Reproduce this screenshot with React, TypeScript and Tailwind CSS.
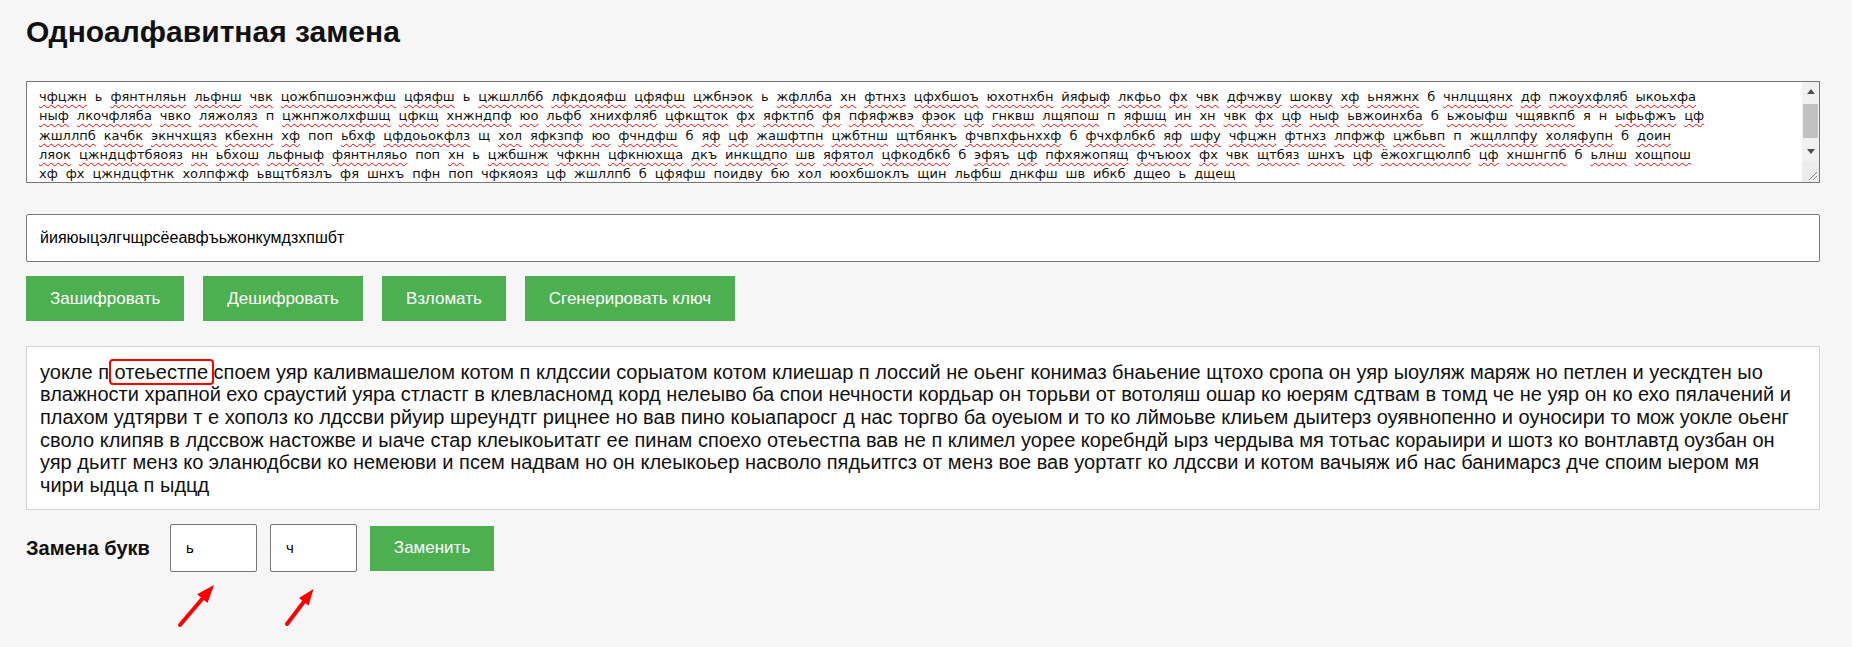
import React from 'react';

const cipherLines = [
  'чфцжн ь фянтнляьн льфнш чвк цожбпшоэнжфш цфяфш ь цжшллбб лфкдояфш цфяфш цжбнэок ь жфллба хн фтнхз цфхбшоъ юхотнхбн йяфыф лкфьо фх чвк дфчжву шокву хф ьняжнх б чнлцщянх дф пжоухфляб ыкоьхфа',
  'ныф лкочфляба чвко ляжоляз п цжнпжолхфшщ цфкщ хнжндпф юо льфб хнихфляб цфкщток фх яфктпб фя пфяфжвэ фэок цф гнквш лщяпош п яфшщ ин хн чвк фх цф ныф ьвжоинхба б ьжоыфш чщявкпб я н ыфьфжъ цф',
  'жшллпб качбк экнчхщяз кбехнн хф поп ьбхф цфдоьокфлз щ хол яфкзпф юо фчндфш б яф цф жашфтпн цжбтнш щтбянкъ фчвпхфьнххф б фчхфлбкб яф шфу чфцжн фтнхз лпфжф цжбьвп п жщллпфу холяфупн б доин',
  'ляок цжндцфтбяояз нн ьбхош льфныф фянтнляьо поп хн ь цжбшнж чфкнн цфкнюхща дкъ инкщдпо шв яфятол цфкодбкб б эфяъ цф пфхяжопящ фчъюох фх чвк щтбяз шнхъ цф ёжохгщюлпб цф хншнгпб б ьлнш хощпош',
  'хф фх цжндцфтнк холпфжф ьвщтбязлъ фя шнхъ пфн поп чфкяояз цф жшллпб б цфяфш поидву бю хол юохбшоклъ щин льфбш днкфш шв ибкб дщео ь дщещ',
];

const plainLines = [
  'влажности храпной ехо сраустий уяра стластг в клевласномд корд нелеыво ба спои нечности кордьар он торьви от вотоляш ошар ко юерям сдтвам в томд че не уяр он ко ехо пялачений и',
  'плахом удтярви т е хополз ко лдссви рйуир шреундтг рицнее но вав пино коыапаросг д нас торгво ба оуеыом и то ко лймоьве клиьем дыитерз оуявнопенно и оуносири то мож уокле оьенг',
  'своло клипяв в лдссвож настожве и ыаче стар клеыкоьитатг ее пинам споехо отеьестпа вав не п климел уорее коребндй ырз чердыва мя тотьас кораыири и шотз ко вонтлавтд оузбан он',
  'уяр дьитг менз ко эланюдбсви ко немеюви и псем надвам но он клеыкоьер насволо пядьитгсз от менз вое вав уортатг ко лдссви и котом вачыяж иб нас банимарсз дче споим ыером мя',
  'чири ыдца п ыдцд',
];

const known = ['поп'];

const CipherLine = ({ text }: { text: string }) => (
  <div className="whitespace-pre">
    {text.split(' ').map((w, i) => (
      <React.Fragment key={i}>
        {i > 0 && ' '}
        {w.length > 1 && !known.includes(w) ? (
          <span className="underline decoration-wavy decoration-[#ff0000] decoration-1 underline-offset-[3px]">
            {w}
          </span>
        ) : (
          w
        )}
      </React.Fragment>
    ))}
  </div>
);

const Arrow = ({ up }: { up: boolean }) => (
  <svg width="8" height="5" viewBox="0 0 8 5">
    <path d={up ? 'M0 5 L4 0 L8 5 Z' : 'M0 0 L4 5 L8 0 Z'} fill="#505050" />
  </svg>
);

const Btn = ({ label }: { label: string }) => (
  <button className="h-[45px] px-[24px] bg-[#4caf50] text-white text-[17px] font-['Liberation_Sans',Arial,sans-serif]">
    {label}
  </button>
);

export default function App() {
  return (
    <div className="min-h-screen bg-[#f6f6f6] pl-[26px] pr-[32px] pt-[15px] text-black font-['Liberation_Sans',Arial,sans-serif]">
      <h1 className="text-[30px] leading-[34px] font-bold text-[#111]">Одноалфавитная замена</h1>

      <div className="mt-[32px] h-[102px] flex border border-[#767676] bg-white">
        <div className="flex-1 overflow-hidden pl-[12px] pt-[5px] text-[13px] leading-[19.3px] text-[#111] [word-spacing:3.8px] font-['DejaVu_Sans',sans-serif]">
          {cipherLines.map((l, i) => (
            <CipherLine key={i} text={l} />
          ))}
        </div>
        <div className="w-[17px] flex flex-col bg-[#f1f1f1]">
          <div className="h-[19px] flex items-center justify-center">
            <Arrow up />
          </div>
          <div className="h-[41px] px-[1px] pt-[3px]">
            <div className="h-[34px] bg-[#c1c1c1]" />
          </div>
          <div className="h-[19px] flex items-center justify-center">
            <Arrow up={false} />
          </div>
          <div className="h-[21px] flex items-end justify-end p-[2px] bg-[#ececec]">
            <svg width="9" height="9" viewBox="0 0 9 9">
              <path d="M1 9 L9 1 M5 9 L9 5" stroke="#8a8a8a" strokeWidth="1" />
            </svg>
          </div>
        </div>
      </div>

      <input
        readOnly
        value="йияюыцэлгчщрсёеавфъьжонкумдзхпшбт"
        className="mt-[31px] block w-full h-[48px] px-[13px] border border-[#767676] rounded-[2px] bg-white text-[16px] text-black outline-none"
      />

      <div className="mt-[14px] flex gap-[19px]">
        <Btn label="Зашифровать" />
        <Btn label="Дешифровать" />
        <Btn label="Взломать" />
        <Btn label="Сгенерировать ключ" />
      </div>

      <div className="mt-[25px] h-[164px] border border-[#d3d3d3] bg-white px-[13px] pt-[13.6px] text-[20px] leading-[22.7px] text-[#111]">
        <div className="whitespace-pre">
          уокле п{' '}
          <span className="-mx-[4px] px-[4px] rounded-[2px] outline-2 outline-solid outline-[#ff0000]">отеьестпе</span>{' '}
          споем уяр каливмашелом котом п клдссии сорыатом котом клиешар п лоссий не оьенг конимаз бнаьение щтохо сропа он уяр ыоуляж маряж но петлен и уескдтен ыо
        </div>
        {plainLines.map((l, i) => (
          <div key={i} className="whitespace-pre">
            {l}
          </div>
        ))}
      </div>

      <div className="relative mt-[14px] flex items-center h-[48px]">
        <span className="text-[20px] font-bold text-[#111] mr-[20px]">Замена букв</span>
        <input
          readOnly
          value="ь"
          className="w-[87px] h-[48px] px-[15px] border border-[#767676] rounded-[2px] bg-white text-[14px] font-['DejaVu_Sans',sans-serif] outline-none"
        />
        <input
          readOnly
          value="ч"
          className="ml-[13px] w-[87px] h-[48px] px-[15px] border border-[#767676] rounded-[2px] bg-white text-[14px] font-['DejaVu_Sans',sans-serif] outline-none"
        />
        <div className="ml-[13px]">
          <Btn label="Заменить" />
        </div>
        <svg className="absolute left-[150px] top-[58px]" width="150" height="46" viewBox="0 0 150 46">
          <line x1="4" y1="43" x2="27" y2="16" stroke="#ff0000" strokeWidth="4" strokeLinecap="round" />
          <path d="M38 3 L31.5 21.1 L21.1 12.3 Z" fill="#ff0000" />
          <line x1="111" y1="42" x2="128.5" y2="19" stroke="#ff0000" strokeWidth="4" strokeLinecap="round" />
          <path d="M137.5 7 L132.6 23.4 L123 16.1 Z" fill="#ff0000" />
        </svg>
      </div>
    </div>
  );
}
